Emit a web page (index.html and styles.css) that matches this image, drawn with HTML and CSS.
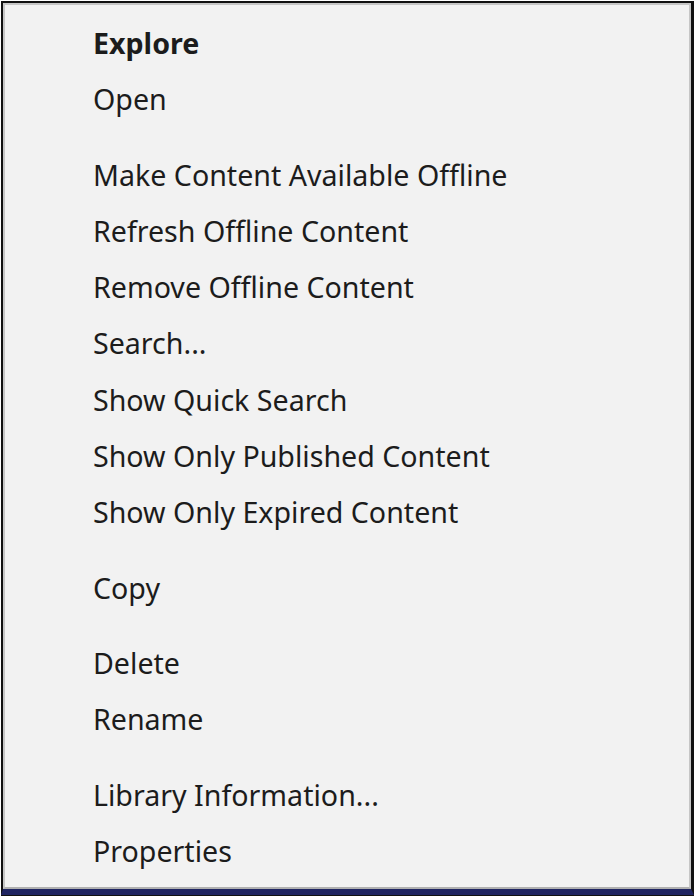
FILE: index.html
```html
<!DOCTYPE html>
<html lang="en">
<head>
    <meta charset="UTF-8">
    <meta name="viewport" content="width=device-width, initial-scale=1.0">
    <title>Context Menu</title>
    <link rel="stylesheet" href="styles.css">
</head>
<body>
    <div class="frame">
        <div class="menu">
            <ul class="items">
                <li class="item default">Explore</li>
                <li class="item">Open</li>
                <li class="sep"></li>
                <li class="item">Make Content Available Offline</li>
                <li class="item">Refresh Offline Content</li>
                <li class="item">Remove Offline Content</li>
                <li class="item">Search...</li>
                <li class="item">Show Quick Search</li>
                <li class="item">Show Only Published Content</li>
                <li class="item">Show Only Expired Content</li>
                <li class="sep"></li>
                <li class="item">Copy</li>
                <li class="sep"></li>
                <li class="item">Delete</li>
                <li class="item">Rename</li>
                <li class="sep"></li>
                <li class="item">Library Information...</li>
                <li class="item">Properties</li>
            </ul>
        </div>
    </div>
</body>
</html>
```

FILE: styles.css
```css
html, body {
    margin: 0;
    padding: 0;
    background-color: #ffffff;
}
.frame {
    width: 694px;
    height: 896px;
    box-sizing: border-box;
    padding: 1px 0 1px 1px;
}
.menu {
    height: 100%;
    box-sizing: border-box;
    border-top: 2px solid #111111;
    border-left: 2px solid #111111;
    border-right: 3px solid #111111;
    border-bottom: 6px solid #1f2461;
    box-shadow: 0 1px 0 #111111;
    background-color: #f2f2f2;
    font-family: "Noto Sans", "Open Sans", sans-serif;
    color: #1c1c1c;
}
.items {
    list-style: none;
    margin: 0;
    height: 100%;
    box-sizing: border-box;
    padding: 10px 0 0 88px;
    border: 2px solid #c6c6c6;
    border-bottom-color: #b0b0b0;
}
.item {
    height: 56.3px;
    line-height: 56.3px;
    font-size: 28.6px;
    white-space: nowrap;
}
.item.default {
    font-weight: bold;
}
.sep {
    height: 19px;
}
```
